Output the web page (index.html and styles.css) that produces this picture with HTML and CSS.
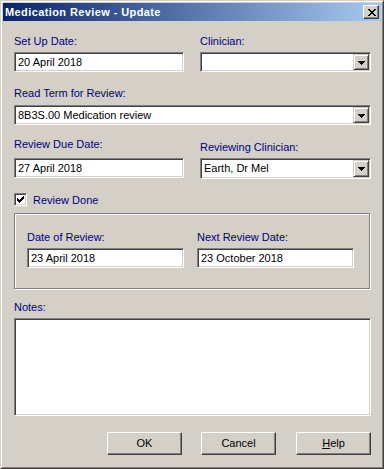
FILE: index.html
```
<!DOCTYPE html>
<html>
<head>
<meta charset="utf-8">
<title>Medication Review - Update</title>
<link rel="stylesheet" href="styles.css">
</head>
<body>
<div class="window">
  <div class="titlebar">
    <span class="title">Medication Review - Update</span>
    <span class="close"><svg width="8" height="7" viewBox="0 0 8 7" shape-rendering="crispEdges"><path fill="#000" d="M0 0h2v1H0zM6 0h2v1H6zM1 1h2v1H1zM5 1h2v1H5zM2 2h4v1H2zM3 3h2v1H3zM2 4h4v1H2zM1 5h2v1H1zM5 5h2v1H5zM0 6h2v1H0zM6 6h2v1H6z"/></svg></span>
  </div>
  <div class="content">
    <div class="row row1">
      <div class="field col-left">
        <div class="label">Set Up Date:</div>
        <div class="textbox">20 April 2018</div>
      </div>
      <div class="field col-right">
        <div class="label">Clinician:</div>
        <div class="combo"><span class="value"></span><span class="dropbtn"><svg width="7" height="4" viewBox="0 0 7 4" shape-rendering="crispEdges"><path fill="#000" d="M0 0h7v1H0zM1 1h5v1H1zM2 2h3v1H2zM3 3h1v1H3z"/></svg></span></div>
      </div>
    </div>

    <div class="field row2">
      <div class="label label-gap5">Read Term for Review:</div>
      <div class="combo"><span class="value">8B3S.00 Medication review</span><span class="dropbtn"><svg width="7" height="4" viewBox="0 0 7 4" shape-rendering="crispEdges"><path fill="#000" d="M0 0h7v1H0zM1 1h5v1H1zM2 2h3v1H2zM3 3h1v1H3z"/></svg></span></div>
    </div>

    <div class="row row3">
      <div class="field col-left">
        <div class="label label-gap7">Review Due Date:</div>
        <div class="textbox">27 April 2018</div>
      </div>
      <div class="field col-right">
        <div class="label label-low">Reviewing Clinician:</div>
        <div class="combo combo-tall"><span class="value">Earth, Dr Mel</span><span class="dropbtn"><svg width="7" height="4" viewBox="0 0 7 4" shape-rendering="crispEdges"><path fill="#000" d="M0 0h7v1H0zM1 1h5v1H1zM2 2h3v1H2zM3 3h1v1H3z"/></svg></span></div>
      </div>
    </div>

    <div class="checkrow">
      <span class="checkbox"><svg width="7" height="7" viewBox="0 0 7 7" shape-rendering="crispEdges"><path fill="#000" d="M0 2h1v3H0zM1 3h1v3H1zM2 4h1v3H2zM3 3h1v3H3zM4 2h1v3H4zM5 1h1v3H5zM6 0h1v3H6z"/></svg></span>
      <span class="checklabel">Review Done</span>
    </div>

    <div class="group">
      <div class="field">
        <div class="label">Date of Review:</div>
        <div class="textbox">23 April 2018</div>
      </div>
      <div class="field">
        <div class="label">Next Review Date:</div>
        <div class="textbox">23 October 2018</div>
      </div>
    </div>

    <div class="field notes">
      <div class="label">Notes:</div>
      <div class="textarea"></div>
    </div>

    <div class="buttons">
      <span class="btn">OK</span>
      <span class="btn">Cancel</span>
      <span class="btn btn-help"><u>H</u>elp</span>
    </div>
  </div>
</div>
</body>
</html>
```
FILE: styles.css
```
* { box-sizing: border-box; }
html, body { margin: 0; padding: 0; background: #d4d0c8; }
body {
  width: 384px;
  height: 469px;
  overflow: hidden;
  font-family: "Liberation Sans", Arial, sans-serif;
  font-size: 11px;
  color: #000;
}
.window {
  width: 384px;
  height: 469px;
  border: 1px solid;
  border-color: #d4d0c8 #404040 #404040 #d4d0c8;
  box-shadow: inset 1px 1px #fff, inset -1px -1px #808080;
  padding: 2px;
  display: flex;
  flex-direction: column;
  background: #d4d0c8;
}
.titlebar {
  height: 18px;
  flex: none;
  display: flex;
  align-items: center;
  justify-content: space-between;
  padding: 0 2px;
  background: linear-gradient(to right, #0a246a, #a6caf0);
}
.title {
  color: #fff;
  font-weight: bold;
  font-size: 11px;
  line-height: 18px;
  letter-spacing: 0.4px;
  white-space: nowrap;
}
.close {
  width: 16px;
  height: 14px;
  display: flex;
  align-items: center;
  justify-content: center;
  background: #d4d0c8;
  border: 1px solid;
  border-color: #fff #404040 #404040 #fff;
  box-shadow: inset -1px -1px #808080, inset 1px 1px #d4d0c8;
}
.close svg { display: block; margin-left: 1px; }

.content {
  flex: 1;
  display: flex;
  flex-direction: column;
  padding: 14px 10px 0 11px;
}
.row { display: flex; gap: 16px; }
.field { display: flex; flex-direction: column; }
.col-left { width: 170px; }
.col-right { width: 171px; }
.label {
  color: #000080;
  line-height: 13px;
  height: 13px;
  white-space: nowrap;
  margin-bottom: 4px;
}
.label-gap5 { margin-bottom: 5px; }
.label-gap7 { margin-bottom: 7px; }
.label-low { margin-top: 3px; margin-bottom: 4px; }

.textbox, .textarea, .combo {
  background: #fff;
  border: 1px solid;
  border-color: #808080 #fff #fff #808080;
  box-shadow: inset 1px 1px #404040, inset -1px -1px #d4d0c8;
}
.textbox {
  height: 20px;
  padding: 1px 3px;
  line-height: 16px;
  white-space: nowrap;
}
.combo {
  height: 20px;
  padding: 1px;
  display: flex;
}
.combo-tall { height: 21px; }
.combo .value {
  flex: 1;
  padding-left: 2px;
  line-height: 16px;
  white-space: nowrap;
}
.dropbtn {
  width: 16px;
  flex: none;
  display: flex;
  align-items: center;
  justify-content: center;
  background: #d4d0c8;
  border: 1px solid;
  border-color: #d4d0c8 #404040 #404040 #d4d0c8;
  box-shadow: inset 1px 1px #fff, inset -1px -1px #808080;
}
.dropbtn svg { display: block; margin-top: 1px; }

.row2 { margin-top: 15px; }
.row3 { margin-top: 13px; }

.checkrow {
  margin-top: 14px;
  display: flex;
  align-items: flex-start;
  height: 13px;
}
.checkbox {
  width: 13px;
  height: 13px;
  background: #fff;
  border: 1px solid;
  border-color: #808080 #fff #fff #808080;
  box-shadow: inset 1px 1px #404040, inset -1px -1px #d4d0c8;
  padding: 2px;
}
.checkbox svg { display: block; }
.checklabel {
  color: #000080;
  margin-left: 6px;
  line-height: 13px;
  margin-top: 1px;
}

.group {
  margin-top: 7px;
  width: 356px;
  height: 76px;
  border: 1px solid #808080;
  box-shadow: 1px 1px 0 #fff, inset 1px 1px 0 #fff;
  padding: 17px 0 0 12px;
  display: grid;
  grid-template-columns: 157px 157px;
  column-gap: 13px;
  align-content: start;
}

.notes { margin-top: 12px; }
.textarea { height: 98px; }

.buttons {
  margin-top: 16px;
  display: flex;
  justify-content: flex-end;
  gap: 19px;
}
.btn {
  width: 75px;
  height: 23px;
  display: flex;
  align-items: center;
  justify-content: center;
  border: 1px solid;
  border-color: #fff #404040 #404040 #fff;
  box-shadow: inset -1px -1px #808080, inset 1px 1px #d4d0c8;
  background: #d4d0c8;
  color: #000;
  line-height: 13px;
}
.btn-help { margin-left: 1px; }
.btn u { text-decoration: underline; }
```
